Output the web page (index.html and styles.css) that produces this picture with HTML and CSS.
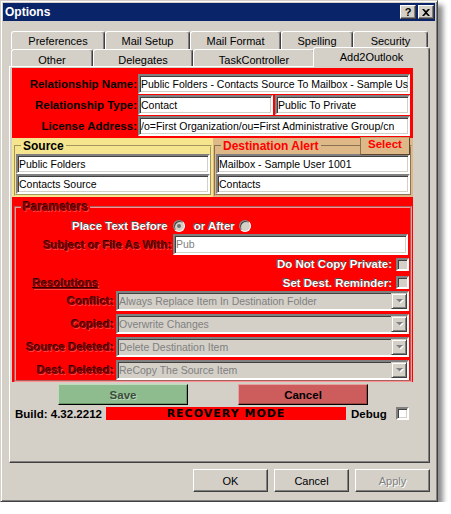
FILE: index.html
```html
<!DOCTYPE html>
<html>
<head>
<meta charset="utf-8">
<title>Options</title>
<link rel="stylesheet" href="styles.css">
</head>
<body>
<div class="window">
  <div class="titlebar">
    <span class="title">Options</span>
    <div class="tbtns">
      <span class="tbtn help">?</span>
      <span class="tbtn close"><svg width="8" height="7" viewBox="0 0 8 7"><path d="M0 0H2L4 2L6 0H8L5 3.5L8 7H6L4 5L2 7H0L3 3.5Z" fill="#000"/></svg></span>
    </div>
  </div>
  <div class="body">
    <div class="tabs">
      <div class="tabrow r1">
        <div class="tab w94">Preferences</div>
        <div class="tab w85">Mail Setup</div>
        <div class="tab w91">Mail Format</div>
        <div class="tab w72">Spelling</div>
        <div class="tab w75">Security</div>
      </div>
      <div class="tabrow r2">
        <div class="tab w82">Other</div>
        <div class="tab w100">Delegates</div>
        <div class="tab w122">TaskController</div>
        <div class="tab sel">Add2Outlook</div>
      </div>
    </div>
    <div class="panel">
      <div class="rel">
        <div class="frow">
          <span class="rlbl">Relationship Name:</span>
          <div class="inp full">Public Folders - Contacts Source To Mailbox - Sample Us</div>
        </div>
        <div class="frow">
          <span class="rlbl">Relationship Type:</span>
          <div class="inp half">Contact</div>
          <div class="inp half gap">Public To Private</div>
        </div>
        <div class="frow">
          <span class="rlbl">License Address:</span>
          <div class="inp full">/o=First Organization/ou=First Administrative Group/cn</div>
        </div>
      </div>
      <div class="sd">
        <div class="src">
          <fieldset class="gb gb-src">
            <legend class="lg-src">Source</legend>
            <div class="inp">Public Folders</div>
            <div class="inp">Contacts Source</div>
          </fieldset>
        </div>
        <div class="dst">
          <fieldset class="gb gb-dst">
            <legend class="lg-dst">Destination Alert</legend>
            <div class="inp">Mailbox - Sample User 1001</div>
            <div class="inp">Contacts</div>
          </fieldset>
          <div class="selbtn">Select</div>
        </div>
      </div>
      <div class="params">
        <fieldset class="gb gb-par">
          <legend class="lg-par mar">Parameters</legend>
          <div class="place">
            <span class="emb">Place Text Before</span>
            <span class="radio on"></span>
            <span class="emb after">or After</span>
            <span class="radio r2b"></span>
          </div>
          <div class="subj">
            <span class="mar slbl">Subject or File As With:</span>
            <div class="inp sinp"><span class="ph">Pub</span></div>
          </div>
          <div class="chkrow dnc">
            <span class="emb">Do Not Copy Private:</span>
            <span class="cb dis"></span>
          </div>
          <div class="chkrow sdr">
            <span class="mar res">Resolutions</span>
            <span class="emb">Set Dest. Reminder:</span>
            <span class="cb dis"></span>
          </div>
          <div class="ddrow">
            <span class="mar dlbl">Conflict:</span>
            <div class="dd"><span class="ddtext">Always Replace Item In Destination Folder</span><span class="ddbtn"><svg width="9" height="6" viewBox="0 0 9 6"><path d="M2 2H9L5.5 5.5Z" fill="#fff"/><path d="M1 1H8L4.5 4.5Z" fill="#808080"/></svg></span></div>
          </div>
          <div class="ddrow">
            <span class="mar dlbl">Copied:</span>
            <div class="dd"><span class="ddtext">Overwrite Changes</span><span class="ddbtn"><svg width="9" height="6" viewBox="0 0 9 6"><path d="M2 2H9L5.5 5.5Z" fill="#fff"/><path d="M1 1H8L4.5 4.5Z" fill="#808080"/></svg></span></div>
          </div>
          <div class="ddrow">
            <span class="mar dlbl">Source Deleted:</span>
            <div class="dd"><span class="ddtext">Delete Destination Item</span><span class="ddbtn"><svg width="9" height="6" viewBox="0 0 9 6"><path d="M2 2H9L5.5 5.5Z" fill="#fff"/><path d="M1 1H8L4.5 4.5Z" fill="#808080"/></svg></span></div>
          </div>
          <div class="ddrow">
            <span class="mar dlbl">Dest. Deleted:</span>
            <div class="dd"><span class="ddtext">ReCopy The Source Item</span><span class="ddbtn"><svg width="9" height="6" viewBox="0 0 9 6"><path d="M2 2H9L5.5 5.5Z" fill="#fff"/><path d="M1 1H8L4.5 4.5Z" fill="#808080"/></svg></span></div>
          </div>
        </fieldset>
      </div>
      <div class="actrow">
        <div class="abtn save">Save</div>
        <div class="abtn cancel">Cancel</div>
      </div>
      <div class="buildrow">
        <span class="build">Build: 4.32.2212</span>
        <span class="recovery">RECOVERY MODE</span>
        <span class="debug">Debug</span>
        <span class="cb white"></span>
      </div>
    </div>
    <div class="dlgbtns">
      <div class="btn">OK</div>
      <div class="btn">Cancel</div>
      <div class="btn disabled">Apply</div>
    </div>
  </div>
</div>
</body>
</html>
```
FILE: styles.css
```css
* { box-sizing: border-box; }
body {
  margin: 0;
  background: #fff;
  font-family: "Liberation Sans", Arial, sans-serif;
  font-size: 10.5px;
  color: #000;
}
.window {
  width: 438px;
  height: 502px;
  background: #d4d0c8;
  border: 1px solid;
  border-color: #d4d0c8 #404040 #404040 #d4d0c8;
  box-shadow: inset 1px 1px #fff, inset -1px -1px #808080, 5px 5px 5px rgba(0,0,0,0.45);
  padding: 2px;
  display: flex;
  flex-direction: column;
}
.titlebar {
  height: 18px;
  background: #0a246a;
  display: flex;
  align-items: center;
  padding: 0 1px 0 2px;
  color: #fff;
}
.title { font-weight: bold; font-size: 12px; }
.tbtns { margin-left: auto; display: flex; gap: 2px; }
.tbtn {
  width: 16px; height: 14px;
  background: #d4d0c8;
  border: 1px solid;
  border-color: #fff #404040 #404040 #fff;
  box-shadow: inset -1px -1px #808080;
  display: flex; align-items: center; justify-content: center;
  color: #000; font-weight: bold; font-size: 11px; line-height: 12px;
}
.body { padding: 10px 0 0 6px; display: flex; flex-direction: column; }
.tabs { margin-left: 2px; width: 417px; }
.tabrow { display: flex; }
.r1 { height: 18px; }
.r2 { height: 17px; }
.tab {
  background: #d4d0c8;
  border-left: 1px solid #fff;
  border-top: 1px solid #fff;
  border-right: 1px solid #404040;
  box-shadow: inset -1px 0 #808080;
  border-radius: 3px 3px 0 0;
  display: flex; align-items: center; justify-content: center;
  padding-top: 1px;
  font-size: 11px;
}
.r2 .tab { padding-top: 3px; }
.w94 { width: 94px; } .w85 { width: 85px; } .w91 { width: 91px; }
.w72 { width: 72px; } .w75 { width: 75px; } .w82 { width: 82px; }
.w100 { width: 100px; } .w122 { width: 122px; }
.r2 .tab.sel {
  width: 117px; height: 20px;
  margin: -2px -2px 0 -2px;
  align-self: flex-start;
  position: relative; z-index: 2;
  padding-top: 0; padding-bottom: 1px;
}
.panel {
  width: 421px; height: 397px;
  border: 1px solid;
  border-color: #fff #404040 #404040 #fff;
  box-shadow: inset -1px -1px #808080;
  padding: 1px 0 0 2px;
}
.inp {
  height: 20px;
  background: #fff;
  border: 2px solid;
  border-color: #808080 #fff #fff #808080;
  box-shadow: inset 1px 1px #404040, inset -1px -1px #d4d0c8;
  padding: 0 1px;
  line-height: 16px;
  white-space: nowrap;
  overflow: hidden;
  font-size: 10.5px;
}
.rel {
  width: 401px; height: 70px;
  background: #ff0000;
  padding-top: 6px;
  display: flex; flex-direction: column; gap: 1px;
}
.frow { display: flex; align-items: center; height: 20px; }
.rlbl { width: 126px; text-align: right; font-weight: bold; font-size: 11.5px; padding-right: 1px; }
.full { width: 272px; }
.half { width: 135px; }
.gap { margin-left: 2px; }
.sd { display: flex; height: 59px; }
.src { width: 201px; background: #f5e58e; padding: 2px 1px 1px 2px; }
.dst { width: 200px; background: #deb887; padding: 2px 1px 1px 1px; position: relative; }
.gb { margin: 0; padding: 2px 0 0 0; min-width: 0; border: 2px groove; }
.gb-src { border-color: #f5e58e; }
.gb-dst { border-color: #deb887; }
.gb-src .inp, .gb-dst .inp { width: 194px; }
legend { padding: 0 2px; margin-left: 5px; font-weight: bold; font-size: 12px; line-height: 12px; }
.lg-dst { color: #ff0000; }
.selbtn {
  position: absolute; top: -1px; left: 147px;
  width: 50px; height: 18px;
  background: #deb887;
  border: 1px solid;
  border-color: #c4a070 #5a4630 #5a4630 #8a7050;
  color: #ff0000; font-weight: bold; font-size: 11.5px;
  text-align: center; line-height: 13px;
}
.params { width: 401px; height: 185px; background: #ff0000; padding: 4px 1px 0 2px; }
.gb-par { border-color: #ff9090; height: 181px; padding: 0; }
.mar { font-weight: bold; font-size: 11.5px; color: #8a0000; text-shadow: -1px -1px 0 #3a0000, 1px 1px 0 rgba(255,150,150,0.45); }
.emb { font-weight: bold; font-size: 11.5px; color: #fff; text-shadow: -1px -1px 0 #505050; }
.lg-par { font-size: 12px; }
.place { margin-top: 6px; height: 14px; display: flex; align-items: center; padding-left: 56px; }
.radio {
  width: 12px; height: 12px; border-radius: 50%;
  background: #d4d0c8;
  border: 1px solid;
  border-color: #808080 #fff #fff #808080;
  box-shadow: inset 1px 1px #404040, inset -1px -1px #d4d0c8;
  margin-left: 5px;
  display: flex; align-items: center; justify-content: center;
}
.radio.on::after { content: ""; width: 4px; height: 4px; border-radius: 50%; background: #707070; }
.after { margin-left: 9px; }
.r2b { margin-left: 4px; }
.subj { margin-top: 1px; height: 21px; display: flex; align-items: center; }
.slbl { width: 156px; text-align: right; }
.sinp { width: 235px; height: 21px; margin-left: 1px; }
.ph { color: #808080; }
.chkrow { display: flex; align-items: center; justify-content: flex-end; padding-right: 1px; }
.dnc { margin-top: 2px; height: 14px; }
.sdr { margin-top: 4px; height: 15px; }
.res { margin-right: auto; margin-left: 17px; text-decoration: underline; align-self: flex-end; line-height: 13px; }
.cb {
  width: 13px; height: 13px;
  border: 2px solid;
  border-color: #808080 #fff #fff #808080;
  box-shadow: inset 1px 1px #404040, inset -1px -1px #d4d0c8;
  margin-left: 4px;
}
.cb.dis { background: #d4d0c8; }
.cb.white { background: #fff; }
.ddrow { display: flex; align-items: center; height: 20px; margin-top: 3px; }
.sdr + .ddrow { margin-top: 1px; }
.dlbl { width: 98px; text-align: right; margin-right: 2px; }
.dd {
  width: 293px; height: 20px;
  background: #d4d0c8;
  border: 2px solid;
  border-color: #808080 #fff #fff #808080;
  box-shadow: inset 1px 1px #404040, inset -1px -1px #d4d0c8;
  display: flex; align-items: center;
  padding-left: 1px;
  color: #808080;
}
.ddtext { flex: 1; white-space: nowrap; overflow: hidden; }
.ddbtn {
  width: 16px; height: 16px;
  border: 1px solid;
  border-color: #d4d0c8 #404040 #404040 #d4d0c8;
  box-shadow: inset 1px 1px #fff, inset -1px -1px #808080;
  display: flex; align-items: center; justify-content: center;
}
.actrow { display: flex; margin-top: 2px; padding-left: 46px; gap: 50px; }
.abtn {
  width: 130px; height: 21px;
  border: 1px solid;
  display: flex; align-items: center; justify-content: center;
  font-weight: bold; font-size: 11.5px;
}
.save {
  background: #8fbc8f;
  border-color: #bcdcbc #000 #000 #bcdcbc;
  box-shadow: inset -1px -1px #6a986a;
  color: #3a4e3a;
  text-shadow: 1px 1px 0 #b8d8b8;
}
.cancel {
  background: #cd5c5c;
  border-color: #e8a0a0 #000 #000 #e8a0a0;
  box-shadow: inset -1px -1px #a04444;
}
.buildrow { display: flex; align-items: center; height: 15px; margin-top: 1px; }
.build { width: 94px; padding-left: 3px; font-weight: bold; font-size: 11.5px; }
.recovery {
  width: 240px; height: 13px;
  background: #ff0000;
  font-family: "DejaVu Sans", sans-serif;
  font-weight: bold; font-size: 11px;
  letter-spacing: 1px;
  text-align: center; line-height: 13px;
}
.debug { width: 45px; margin-left: 5px; font-weight: bold; font-size: 11.5px; }
.buildrow .cb { margin-left: 0; }
.dlgbtns { display: flex; justify-content: flex-end; gap: 6px; margin-top: 6px; width: 421px; }
.btn {
  width: 75px; height: 23px;
  border: 1px solid;
  border-color: #fff #404040 #404040 #fff;
  box-shadow: inset -1px -1px #808080;
  display: flex; align-items: center; justify-content: center;
  font-size: 11px;
}
.btn.disabled { color: #808080; text-shadow: 1px 1px 0 #fff; }
```
